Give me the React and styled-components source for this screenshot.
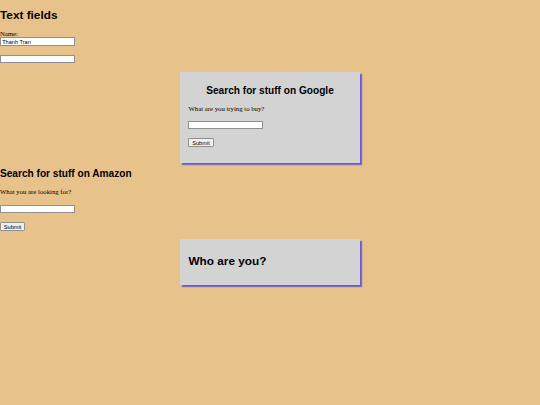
import styled, { createGlobalStyle } from 'styled-components'

const GlobalStyle = createGlobalStyle`
  html, body {
    margin: 0;
    background: #e8c28b;
  }
`

// the page was drawn at 960px wide and shrunk into the 540px window
const Page = styled.div`
  zoom: 0.5625;
  width: 960px;
  min-height: 720px;
  font-family: 'Liberation Serif', serif;
  color: #000;
`

const Title = styled.h2`
  font-family: 'Liberation Sans', Arial, sans-serif;
  font-size: 21px;
  margin: 14px 0 15px;
`

const SubTitle = styled.h3`
  font-family: 'Liberation Sans', Arial, sans-serif;
  font-size: 18px;
  margin: ${(props) => (props.centered ? '21px 0 16px' : '0 0 16px')};
  text-align: ${(props) => (props.centered ? 'center' : 'left')};
`

const Label = styled.label`
  display: block;
  font-size: 12px;
`

const TextInput = styled.input`
  display: block;
  box-sizing: border-box;
  width: 133px;
  height: 15px;
  margin: 0 0 ${(props) => props.gap || 18}px;
  padding: 0 2px;
  border: 1px solid #8f8f8f;
  background: #fff;
  font-family: 'Liberation Sans', Arial, sans-serif;
  font-size: 10px;
`

const Prompt = styled.p`
  font-size: 12px;
  margin: 0 0 ${(props) => props.gap || 16}px;
`

const SubmitButton = styled.button`
  align-self: flex-start;
  display: block;
  height: 16px;
  padding: 0 5px;
  border: 1px solid #8f8f8f;
  border-radius: 2px;
  background: #efefef;
  font-family: 'Liberation Sans', Arial, sans-serif;
  font-size: 10px;
  color: #000;
`

const Card = styled.div`
  box-sizing: border-box;
  width: 320px;
  min-height: ${(props) => props.height}px;
  margin: 0 auto;
  padding: 1px 15px 0;
  background: #d3d3d3;
  box-shadow: 3px 3px 2px #6a5acd;
  display: flex;
  flex-direction: column;
  justify-content: ${(props) => (props.middle ? 'center' : 'flex-start')};
`

const CardHeading = styled.h2`
  font-family: 'Liberation Sans', Arial, sans-serif;
  font-size: 21px;
  margin: 0 0 3px;
`

const Section = styled.div`
  margin: ${(props) => props.space || '0'};
`

export default function App() {
  return (
    <>
      <GlobalStyle />
      <Page>
        <Title>Text fields</Title>
        <Label htmlFor="name">Name:</Label>
        <TextInput id="name" defaultValue="Thanh Tran" gap={16} />
        <TextInput gap={16} />

        <Section>
          <Card height={162}>
            <SubTitle centered>Search for stuff on Google</SubTitle>
            <Prompt>What are you trying to buy?</Prompt>
            <TextInput gap={16} />
            <SubmitButton>Submit</SubmitButton>
          </Card>
        </Section>

        <Section space="9px 0 0">
          <SubTitle>Search for stuff on Amazon</SubTitle>
          <Prompt gap={17}>What you are looking for?</Prompt>
          <TextInput gap={16} />
          <SubmitButton>Submit</SubmitButton>
        </Section>

        <Section space="13px 0 0">
          <Card height={82} middle>
            <CardHeading>Who are you?</CardHeading>
          </Card>
        </Section>
      </Page>
    </>
  )
}
